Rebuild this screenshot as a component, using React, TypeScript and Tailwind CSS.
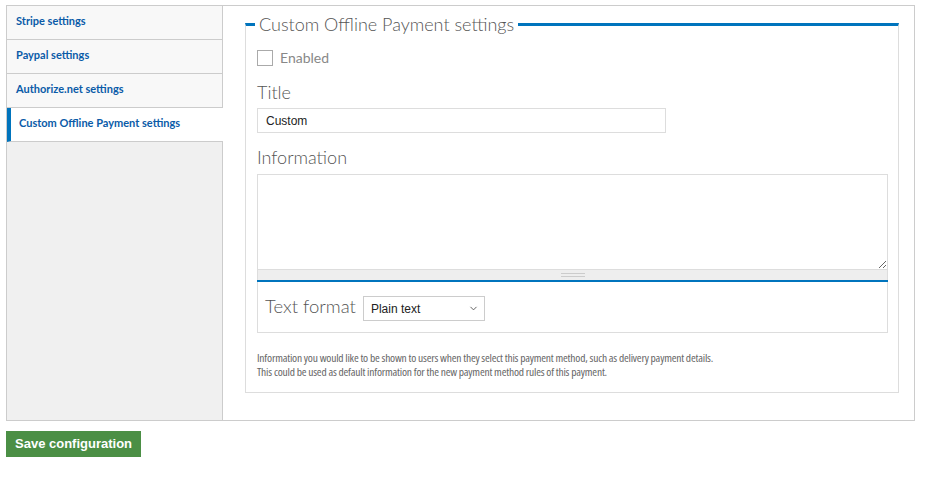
import React from 'react'
import { ChevronDown } from 'lucide-react'

const tabs = ['Stripe settings', 'Paypal settings', 'Authorize.net settings']

const App = () => {
  return (
    <div className="min-h-screen bg-white pt-[5px] pl-[6px] font-['Lato',sans-serif]">
      <div className="flex w-[909px] border border-[#ccc]">
        {/* Vertical tabs */}
        <div className="w-[216px] shrink-0 bg-[#f0f0f0] border-r border-[#ccc]">
          {tabs.map((tab) => (
            <div
              key={tab}
              className="h-[34px] flex items-center pl-[9px] pb-[2px] bg-[#f8f8f8] border-b border-[#ccc] text-[11px] font-bold text-[#0a5ba8]"
            >
              {tab}
            </div>
          ))}
          <div className="h-[34px] flex items-center pl-[8px] pb-[2px] bg-white border-l-4 border-[#0074bd] -mr-px text-[11px] font-bold text-[#0a5ba8] border-b border-b-[#ccc]">
            Custom Offline Payment settings
          </div>
        </div>

        {/* Content */}
        <div className="flex-1 pl-[22px] pr-[15px] pt-[6px] pb-[27px]">
          <fieldset className="border-t-[3px] border-t-[#0074bd] border-x border-b border-x-[#ddd] border-b-[#ddd] pl-[11px] pr-[10px] pb-[13px]">
            <legend className="-ml-[2px] px-[4px] text-[18px] font-light text-[#555] leading-[24px]">
              Custom Offline Payment settings
            </legend>

            <label className="flex items-center gap-[7px] mt-[11px]">
              <span className="w-[16px] h-[16px] border border-[#aaa] bg-white" />
              <span className="text-[14px] text-[#888]">Enabled</span>
            </label>

            <div className="mt-[12px] text-[18px] font-light text-[#555] leading-[24px]">Title</div>
            <div className="mt-[4px] w-[409px] h-[25px] border border-[#ddd] flex items-center pl-[8px] text-[12px] text-[#222] font-['Liberation_Sans',sans-serif]">
              Custom
            </div>

            <div className="mt-[12px] text-[18px] font-light text-[#555] leading-[24px]">Information</div>
            <textarea className="mt-[5px] block w-full h-[96px] border border-[#ddd] resize-y outline-none" />
            <div className="h-[10px] bg-[#eee] border-x border-[#ddd] flex items-center justify-center">
              <div className="w-[24px] h-[4px] border-y border-[#ccc]" />
            </div>
            <div className="h-[2px] bg-[#0074bd]" />
            <div className="border-x border-b border-[#ddd] h-[51px] flex items-center pl-[7px] gap-[7px]">
              <span className="text-[18.5px] font-light text-[#555]">Text format</span>
              <div className="w-[122px] h-[25px] border border-[#ccc] flex items-center justify-between pl-[7px] pr-[5px] text-[12px] text-[#222] font-['Liberation_Sans',sans-serif] mt-[3px]">
                Plain text
                <ChevronDown size={11} strokeWidth={2} className="text-[#555]" />
              </div>
            </div>

            <p className="mt-[18px] text-[11.5px] leading-[14px] text-[#666] font-['Open_Sans',sans-serif] [font-stretch:75%] tracking-[-0.2px]">
              Information you would like to be shown to users when they select this payment method, such as delivery payment details.
              <br />
              This could be used as default information for the new payment method rules of this payment.
            </p>
          </fieldset>
        </div>
      </div>

      <button className="mt-[10px] h-[26px] pl-[9px] pr-[9px] bg-[#4b8f45] text-white text-[13px] font-['Liberation_Sans',sans-serif] font-bold">
        Save configuration
      </button>
    </div>
  )
}

export default App
